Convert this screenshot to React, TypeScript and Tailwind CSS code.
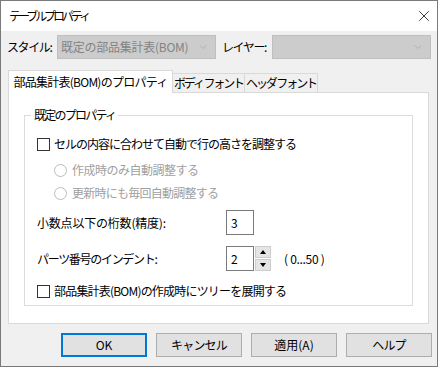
import { X, ChevronDown } from "lucide-react"

const font = "[font-family:'Noto_Sans_CJK_JP',sans-serif]"

const Select = ({ value, width }: { value?: string; width: string }) => (
  <div className={`${width} h-[24px] bg-[#cccccc] border border-[#bfbfbf] flex items-center justify-between pl-[3px] pr-[6px]`}>
    <span className="text-[12px] text-[#838383] leading-none whitespace-nowrap tracking-[-0.25px]">{value}</span>
    <ChevronDown className="w-[12px] h-[12px] text-[#a8a8a8]" strokeWidth={1.5} />
  </div>
)

const Checkbox = ({ label, tracking }: { label: string; tracking: string }) => (
  <div className="h-[20px] flex items-center">
    <div className="w-[13px] h-[13px] border border-[#333333] bg-white" />
    <span className={`ml-[4px] text-[12px] leading-none text-black whitespace-nowrap ${tracking}`}>{label}</span>
  </div>
)

const Radio = ({ label, tracking }: { label: string; tracking: string }) => (
  <div className="h-[20px] flex items-center pl-[17px]">
    <div className="w-[13px] h-[13px] rounded-full border border-[#bcbcbc] bg-white" />
    <span className={`ml-[5px] text-[12px] leading-none text-[#a0a0a0] whitespace-nowrap ${tracking}`}>{label}</span>
  </div>
)

const Button = ({ label, primary, tracking = "" }: { label: string; primary?: boolean; tracking?: string }) => (
  <div
    className={`w-[86px] h-[24px] bg-[#e1e1e1] flex items-center justify-center text-[12px] text-black whitespace-nowrap ${tracking} ${
      primary ? "border-2 border-[#0078d7]" : "border border-[#adadad]"
    }`}
  >
    {label}
  </div>
)

export default function App() {
  return (
    <div className={`${font} w-[439px] h-[368px] bg-white`}>
      <div className="w-[438px] h-[367px] border border-[#7a7a7a] flex flex-col bg-[#f0f0f0]">
        {/* Title bar */}
        <div className="h-[30px] bg-white flex items-center justify-between pl-[8px] pr-[4px]">
          <span className="text-[12px] text-black whitespace-nowrap tracking-[-3px]">テーブル プロパティ</span>
          <X className="w-[18px] h-[18px] text-black" strokeWidth={1} />
        </div>

        {/* Style / layer row */}
        <div className="flex items-center mt-[4px] pl-[6px]">
          <span className="w-[50px] text-[12px] text-black whitespace-nowrap tracking-[-1.4px]">スタイル:</span>
          <Select value="既定の部品集計表(BOM)" width="w-[159px]" />
          <span className="ml-[6px] w-[50px] text-[12px] text-black whitespace-nowrap tracking-[-1.4px]">レイヤー:</span>
          <Select width="w-[159px]" />
        </div>

        {/* Tabs */}
        <div className="mt-[11px] ml-[7px] flex items-end h-[23px] relative z-10">
          <div className="w-[165px] h-[23px] bg-white border border-b-0 border-[#d9d9d9] flex items-center justify-center text-[12px] text-black whitespace-nowrap tracking-[-0.75px]">
            部品集計表(BOM)のプロパティ
          </div>
          <div className="w-[72px] h-[20px] border border-l-0 border-[#d9d9d9] flex items-center justify-center text-[12px] text-black whitespace-nowrap tracking-[-2.1px]">
            ボディ フォント
          </div>
          <div className="w-[73px] h-[20px] border border-l-0 border-[#d9d9d9] flex items-center justify-center text-[12px] text-black whitespace-nowrap tracking-[-2.1px]">
            ヘッダ フォント
          </div>
        </div>

        {/* Tab panel */}
        <div className="ml-[7px] w-[421px] -mt-px bg-white border border-[#d9d9d9] pt-[22px] px-[15px] pb-[17px]">
          <div className="relative border border-[#dcdcdc] pt-[18px] pb-[4px] pl-[12px]">
            <span className="absolute left-[6px] -top-[9px] bg-white px-[3px] text-[12px] leading-[16px] text-black whitespace-nowrap tracking-[-1.75px]">
              既定のプロパティ
            </span>
            <Checkbox label="セルの内容に合わせて自動で行の高さを調整する" tracking="tracking-[-1px]" />
            <div className="mt-[6px]">
              <Radio label="作成時のみ自動調整する" tracking="tracking-[-0.5px]" />
            </div>
            <div className="mt-[3px]">
              <Radio label="更新時にも毎回自動調整する" tracking="tracking-[-0.75px]" />
            </div>
            <div className="mt-[7px] h-[25px] flex items-center">
              <span className="w-[189px] text-[12px] text-black whitespace-nowrap tracking-[-0.2px]">小数点以下の桁数(精度):</span>
              <div className="w-[28px] h-[25px] border border-[#7a7a7a] bg-white flex items-center pl-[4px] text-[12px] text-black">
                3
              </div>
            </div>
            <div className="mt-[11px] h-[25px] flex items-center">
              <span className="w-[189px] text-[12px] text-black whitespace-nowrap tracking-[-1.3px]">パーツ番号のインデント:</span>
              <div className="w-[28px] h-[25px] border border-[#7a7a7a] bg-white flex items-center pl-[4px] text-[12px] text-black">
                2
              </div>
              <div className="ml-px w-[16px] h-[25px] flex flex-col gap-px">
                <div className="flex-1 bg-[#e5e5e5] border border-[#cccccc] flex items-center justify-center">
                  <div className="w-0 h-0 border-l-[3px] border-r-[3px] border-b-[4px] border-l-transparent border-r-transparent border-b-black" />
                </div>
                <div className="flex-1 bg-[#e5e5e5] border border-[#cccccc] flex items-center justify-center">
                  <div className="w-0 h-0 border-l-[3px] border-r-[3px] border-t-[4px] border-l-transparent border-r-transparent border-t-black" />
                </div>
              </div>
              <span className="ml-[13px] text-[12px] text-black whitespace-nowrap tracking-[-0.3px]">( 0...50 )</span>
            </div>
            <div className="mt-[10px]">
              <Checkbox label="部品集計表(BOM)の作成時にツリーを展開する" tracking="tracking-[-0.8px]" />
            </div>
          </div>
        </div>

        {/* Buttons */}
        <div className="mt-[9px] pl-[60px] flex gap-[9px]">
          <Button label="OK" primary />
          <Button label="キャンセル" tracking="tracking-[-0.8px]" />
          <Button label="適用(A)" />
          <Button label="ヘルプ" tracking="tracking-[-0.8px]" />
        </div>
      </div>
    </div>
  )
}
